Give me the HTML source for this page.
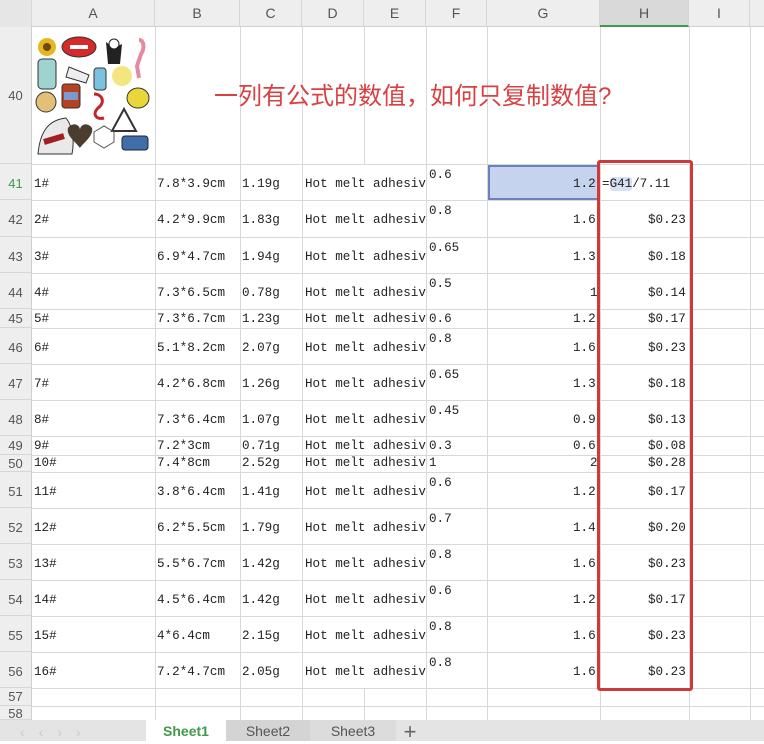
<!DOCTYPE html>
<html><head><meta charset="utf-8"><style>
*{margin:0;padding:0;box-sizing:border-box}
body{width:764px;height:741px;background:#fff;position:relative;overflow:hidden;font-family:"Liberation Mono","Noto Sans CJK SC",monospace;font-size:12.6px;color:#222}
.hd{position:absolute;top:0;left:0;width:764px;height:27px;background:#eeeeee;border-bottom:1px solid #cfcfcf}
.hd span{position:absolute;top:0;height:27px;line-height:27px;text-align:center;font-family:"Liberation Sans",sans-serif;font-size:14px;color:#555;border-right:1px solid #d6d6d6}
.rh{position:absolute;left:0;width:32px;background:#eeeeee;border-right:1px solid #cfcfcf;border-bottom:1px solid #d6d6d6;font-family:"Liberation Sans",sans-serif;font-size:13px;color:#555;text-align:center}
.vl{position:absolute;top:27px;height:693px;width:1px;background:#d8d8d8}
.hl{position:absolute;left:32px;width:732px;height:1px;background:#d8d8d8}
.r{position:absolute;left:0;width:764px}
.r i{font-style:normal;position:absolute;white-space:nowrap}
.tab{position:absolute;top:720px;height:21px;line-height:23px;font-family:"Liberation Sans",sans-serif;font-size:14px;color:#555;text-align:center}
</style></head><body>
<div class="hd">
<span style="left:0;width:32px;background:#e6e6e6"></span>
<span style="left:32px;width:123px">A</span>
<span style="left:155px;width:85px">B</span>
<span style="left:240px;width:62px">C</span>
<span style="left:302px;width:62px">D</span>
<span style="left:364px;width:62px">E</span>
<span style="left:426px;width:61px">F</span>
<span style="left:487px;width:113px">G</span>
<span style="left:600px;width:89px;background:#d9d9d9;border-bottom:2px solid #3f9a4a">H</span>
<span style="left:689px;width:61px">I</span>
</div>
<div class="vl" style="left:155px"></div><div class="vl" style="left:240px"></div><div class="vl" style="left:302px"></div>
<div class="vl" style="left:364px;height:137px"></div><div class="vl" style="left:364px;top:688px;height:32px"></div>
<div class="vl" style="left:426px"></div><div class="vl" style="left:487px"></div>
<div class="vl" style="left:600px"></div><div class="vl" style="left:689px"></div><div class="vl" style="left:750px"></div>
<!-- row 40 -->
<div class="rh" style="top:27px;height:137px;line-height:137px">40</div>
<div class="hl" style="top:164px"></div>
<div style="position:absolute;left:33px;top:28px;width:122px;height:135px;background:#fff"></div>
<svg style="position:absolute;left:34px;top:32px" width="120" height="128">
<circle cx="13" cy="15" r="9" fill="#e6b820"/><circle cx="13" cy="15" r="4" fill="#6a4a1a"/>
<rect x="4" y="27" width="18" height="30" rx="4" fill="#9fd3d0" stroke="#333"/>
<ellipse cx="45" cy="15" rx="17" ry="10" fill="#d42a2a" stroke="#333"/>
<rect x="36" y="13" width="18" height="4" fill="#fff"/>
<path d="M72 10l8 6 8-4-2 20-12 0z" fill="#222"/><circle cx="80" cy="12" r="5" fill="#fff" stroke="#222"/>
<path d="M105 8c5 0 6 8 2 14l-4 12 2 12" stroke="#e58aa0" stroke-width="4" fill="none"/>
<path d="M35 35l20 8-3 8-20-6z" fill="#eee" stroke="#333"/>
<rect x="60" y="36" width="12" height="22" rx="3" fill="#7cc2e0" stroke="#333"/>
<circle cx="88" cy="44" r="10" fill="#f3e680"/>
<ellipse cx="104" cy="66" rx="11" ry="10" fill="#e8d63a" stroke="#333"/>
<rect x="28" y="52" width="18" height="24" rx="3" fill="#b8421f" stroke="#333"/><rect x="30" y="60" width="14" height="8" fill="#7a9ad0"/>
<circle cx="12" cy="70" r="10" fill="#e2c07a" stroke="#333"/>
<path d="M60 62c8 0 12 8 4 14 -6 6-2 12 6 10" stroke="#c4242c" stroke-width="3" fill="none"/>
<path d="M90 77l12 22h-24z" fill="none" stroke="#333" stroke-width="2"/>
<path d="M4 122c2-22 10-34 28-36 8 10 8 26 6 36z" fill="#e9e9e9" stroke="#333"/><path d="M10 110l20-6" stroke="#a02020" stroke-width="6"/>
<path d="M34 96c4-6 12-4 12 2 0-6 8-8 12-2 2 8-10 16-12 20-4-6-14-12-12-20z" fill="#4b3d2d"/>
<path d="M60 100l10-6 10 6v10l-10 6-10-6z" fill="none" stroke="#555"/>
<rect x="88" y="104" width="26" height="14" rx="3" fill="#3f6ea8" stroke="#223"/>
</svg>
<div style="position:absolute;left:214px;top:76px;font-family:'Liberation Sans','Noto Sans CJK SC',sans-serif;font-size:24px;color:#d94040;white-space:nowrap">一列有公式的数值，如何只复制数值?</div>

<!-- data rows -->
<div class="rh" style="top:164px;height:36px;line-height:40px;color:#3f9a4a">41</div>
<div style="position:absolute;left:488px;top:165px;width:112px;height:35px;background:#c6d3ee;border:2px solid #6683bf"></div>
<div class="r" style="top:164px;height:36px;line-height:40px"><i style="left:34px">1#</i><i style="left:157px">7.8*3.9cm</i><i style="left:242px">1.19g</i><i style="left:305px">Hot melt adhesiv</i><i style="left:429px;line-height:22px">0.6</i><i style="left:573px">1.2</i><i style="left:602px">=<span style="background:#d8e0f2;border-radius:3px">G41</span>/7.11</i></div>
<div class="hl" style="top:200px"></div>

<div class="rh" style="top:200px;height:37px;line-height:40px">42</div>
<div class="r" style="top:200px;height:37px;line-height:40px"><i style="left:34px">2#</i><i style="left:157px">4.2*9.9cm</i><i style="left:242px">1.83g</i><i style="left:305px">Hot melt adhesiv</i><i style="left:429px;line-height:22px">0.8</i><i style="left:573px">1.6</i><i style="left:648px">$0.23</i></div>
<div class="hl" style="top:237px"></div>

<div class="rh" style="top:237px;height:36px;line-height:40px">43</div>
<div class="r" style="top:237px;height:36px;line-height:40px"><i style="left:34px">3#</i><i style="left:157px">6.9*4.7cm</i><i style="left:242px">1.94g</i><i style="left:305px">Hot melt adhesiv</i><i style="left:429px;line-height:22px">0.65</i><i style="left:573px">1.3</i><i style="left:648px">$0.18</i></div>
<div class="hl" style="top:273px"></div>

<div class="rh" style="top:273px;height:36px;line-height:40px">44</div>
<div class="r" style="top:273px;height:36px;line-height:40px"><i style="left:34px">4#</i><i style="left:157px">7.3*6.5cm</i><i style="left:242px">0.78g</i><i style="left:305px">Hot melt adhesiv</i><i style="left:429px;line-height:22px">0.5</i><i style="left:590px">1</i><i style="left:648px">$0.14</i></div>
<div class="hl" style="top:309px"></div>

<div class="rh" style="top:309px;height:19px;line-height:20px">45</div>
<div class="r" style="top:309px;height:19px;line-height:20px"><i style="left:34px">5#</i><i style="left:157px">7.3*6.7cm</i><i style="left:242px">1.23g</i><i style="left:305px">Hot melt adhesiv</i><i style="left:429px">0.6</i><i style="left:573px">1.2</i><i style="left:648px">$0.17</i></div>
<div class="hl" style="top:328px"></div>

<div class="rh" style="top:328px;height:36px;line-height:40px">46</div>
<div class="r" style="top:328px;height:36px;line-height:40px"><i style="left:34px">6#</i><i style="left:157px">5.1*8.2cm</i><i style="left:242px">2.07g</i><i style="left:305px">Hot melt adhesiv</i><i style="left:429px;line-height:22px">0.8</i><i style="left:573px">1.6</i><i style="left:648px">$0.23</i></div>
<div class="hl" style="top:364px"></div>

<div class="rh" style="top:364px;height:36px;line-height:40px">47</div>
<div class="r" style="top:364px;height:36px;line-height:40px"><i style="left:34px">7#</i><i style="left:157px">4.2*6.8cm</i><i style="left:242px">1.26g</i><i style="left:305px">Hot melt adhesiv</i><i style="left:429px;line-height:22px">0.65</i><i style="left:573px">1.3</i><i style="left:648px">$0.18</i></div>
<div class="hl" style="top:400px"></div>

<div class="rh" style="top:400px;height:36px;line-height:40px">48</div>
<div class="r" style="top:400px;height:36px;line-height:40px"><i style="left:34px">8#</i><i style="left:157px">7.3*6.4cm</i><i style="left:242px">1.07g</i><i style="left:305px">Hot melt adhesiv</i><i style="left:429px;line-height:22px">0.45</i><i style="left:573px">0.9</i><i style="left:648px">$0.13</i></div>
<div class="hl" style="top:436px"></div>

<div class="rh" style="top:436px;height:19px;line-height:20px">49</div>
<div class="r" style="top:436px;height:19px;line-height:20px"><i style="left:34px">9#</i><i style="left:157px">7.2*3cm</i><i style="left:242px">0.71g</i><i style="left:305px">Hot melt adhesiv</i><i style="left:429px">0.3</i><i style="left:573px">0.6</i><i style="left:648px">$0.08</i></div>
<div class="hl" style="top:455px"></div>

<div class="rh" style="top:455px;height:17px;line-height:17px">50</div>
<div class="r" style="top:455px;height:17px;line-height:17px"><i style="left:34px">10#</i><i style="left:157px">7.4*8cm</i><i style="left:242px">2.52g</i><i style="left:305px">Hot melt adhesiv</i><i style="left:429px">1</i><i style="left:590px">2</i><i style="left:648px">$0.28</i></div>
<div class="hl" style="top:472px"></div>

<div class="rh" style="top:472px;height:36px;line-height:40px">51</div>
<div class="r" style="top:472px;height:36px;line-height:40px"><i style="left:34px">11#</i><i style="left:157px">3.8*6.4cm</i><i style="left:242px">1.41g</i><i style="left:305px">Hot melt adhesiv</i><i style="left:429px;line-height:22px">0.6</i><i style="left:573px">1.2</i><i style="left:648px">$0.17</i></div>
<div class="hl" style="top:508px"></div>

<div class="rh" style="top:508px;height:36px;line-height:40px">52</div>
<div class="r" style="top:508px;height:36px;line-height:40px"><i style="left:34px">12#</i><i style="left:157px">6.2*5.5cm</i><i style="left:242px">1.79g</i><i style="left:305px">Hot melt adhesiv</i><i style="left:429px;line-height:22px">0.7</i><i style="left:573px">1.4</i><i style="left:648px">$0.20</i></div>
<div class="hl" style="top:544px"></div>

<div class="rh" style="top:544px;height:36px;line-height:40px">53</div>
<div class="r" style="top:544px;height:36px;line-height:40px"><i style="left:34px">13#</i><i style="left:157px">5.5*6.7cm</i><i style="left:242px">1.42g</i><i style="left:305px">Hot melt adhesiv</i><i style="left:429px;line-height:22px">0.8</i><i style="left:573px">1.6</i><i style="left:648px">$0.23</i></div>
<div class="hl" style="top:580px"></div>

<div class="rh" style="top:580px;height:36px;line-height:40px">54</div>
<div class="r" style="top:580px;height:36px;line-height:40px"><i style="left:34px">14#</i><i style="left:157px">4.5*6.4cm</i><i style="left:242px">1.42g</i><i style="left:305px">Hot melt adhesiv</i><i style="left:429px;line-height:22px">0.6</i><i style="left:573px">1.2</i><i style="left:648px">$0.17</i></div>
<div class="hl" style="top:616px"></div>

<div class="rh" style="top:616px;height:36px;line-height:40px">55</div>
<div class="r" style="top:616px;height:36px;line-height:40px"><i style="left:34px">15#</i><i style="left:157px">4*6.4cm</i><i style="left:242px">2.15g</i><i style="left:305px">Hot melt adhesiv</i><i style="left:429px;line-height:22px">0.8</i><i style="left:573px">1.6</i><i style="left:648px">$0.23</i></div>
<div class="hl" style="top:652px"></div>

<div class="rh" style="top:652px;height:36px;line-height:40px">56</div>
<div class="r" style="top:652px;height:36px;line-height:40px"><i style="left:34px">16#</i><i style="left:157px">7.2*4.7cm</i><i style="left:242px">2.05g</i><i style="left:305px">Hot melt adhesiv</i><i style="left:429px;line-height:22px">0.8</i><i style="left:573px">1.6</i><i style="left:648px">$0.23</i></div>
<div class="hl" style="top:688px"></div>

<div class="rh" style="top:688px;height:18px;line-height:18px">57</div>
<div class="hl" style="top:706px"></div>
<div class="rh" style="top:706px;height:14px;line-height:16px;overflow:hidden">58</div>

<!-- red box -->
<div style="position:absolute;left:597px;top:160px;width:96px;height:531px;border:3px solid #d0393a;border-radius:3px"></div>

<!-- tabs -->
<div style="position:absolute;left:0;top:720px;width:764px;height:21px;background:#e4e4e4"></div>
<div style="position:absolute;left:20px;top:724px;font-family:'Liberation Sans',sans-serif;font-size:14px;color:#c8c8c8;letter-spacing:14px">‹‹›› </div>
<div class="tab" style="left:146px;width:80px;background:#fff;color:#3f9a4a;font-weight:bold">Sheet1</div>
<div class="tab" style="left:226px;width:84px;background:#d4d4d4">Sheet2</div>
<div class="tab" style="left:310px;width:86px;background:#dcdcdc">Sheet3</div>
<div class="tab" style="left:398px;width:24px;font-size:22px;line-height:24px;color:#666">+</div>
</body></html>
